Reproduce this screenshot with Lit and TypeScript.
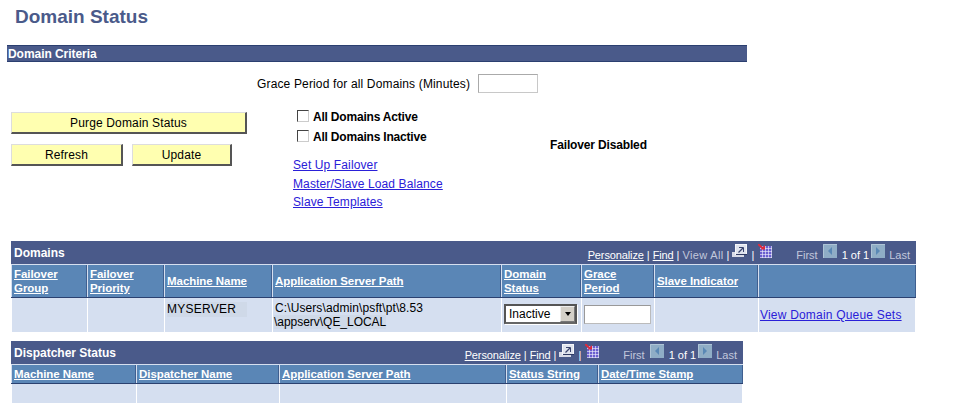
import { LitElement, html, css, svg } from "lit";
import { customElement } from "lit/decorators.js";

const newWin = html`<svg class="ic" width="15" height="14" viewBox="0 0 15 14"><path d="M0 8h3v3h9v2H0z" fill="#d8dbe8"/><rect x="3.5" y="0.5" width="11" height="10" fill="#dfe3ee" stroke="#f4f5fa"/><rect x="4" y="10" width="11" height="1" fill="#2f3a63"/><path d="M7 3.5h4.5V8" fill="none" stroke="#39436e"/><path d="M11 4 6.5 8.5" stroke="#39436e" stroke-width="1.3"/></svg>`;
const dl = html`<svg class="ic" width="15" height="14" viewBox="0 0 15 14"><rect x="2" y="2" width="12" height="12" fill="#f4f4fc"/>${[2, 5, 8, 11].flatMap(y => [2, 5, 8, 11].map(x => svg`<rect x="${x}" y="${y}" width="2.4" height="2.4" fill="#6a5fd0"/>`))}<path d="M0 0 5 4.5" stroke="#e02a3a" stroke-width="2"/><path d="M2.5 5.5h4.5V1z" fill="#e02a3a"/></svg>`;
const arrow = (left: boolean) => html`<svg class="ic" width="14" height="14" viewBox="0 0 14 14"><rect width="14" height="14" fill="#8fadc6"/><path d="M.5 14V.5H14" fill="none" stroke="#aec4d6"/><path d="${left ? "M9 3v8L5 7z" : "M5 3v8l4-4z"}" fill="#5a88b5"/></svg>`;

@customElement("grid-box")
class GridBox extends LitElement {
  static properties = { title: {}, cols: { type: Array }, tpl: {}, viewAll: { type: Boolean }, tall: { type: Boolean } };
  title = "";
  cols: string[] = [];
  tpl = "";
  viewAll = false;
  tall = false;
  static styles = css`
    :host { display: block; font: 12px "Liberation Sans", Arial, sans-serif; }
    .bar { height: 23px; background: #4a5a8a; color: #fff; display: flex; align-items: center; justify-content: space-between; padding: 0 6px 0 3px; }
    .bar b { font-size: 12px; }
    .nav { display: flex; align-items: center; font-size: 11px; color: #e8ebf4; white-space: nowrap; position: relative; top: 2px; }
    .nav a { color: #fff; text-decoration: underline; letter-spacing: -0.12px; }
    .nav .dim { color: #c2c8dc; }
    .nav .va { letter-spacing: 0.35px; }
    .nav .sep { margin: 0 3px; color: #fff; }
    .nav .sp2 { margin: 0 4px; }
    .nav .ic { position: relative; top: -3.5px; }
    .nav .first { margin-left: 23px; }
    .nav .arr { margin: 0 5px; display: flex; }
    .nav .arr2 { margin: 0 4px 0 2px; }
    .nav .of { color: #fff; }
    .row { display: grid; }
    .hd { background: #2b4170; padding-bottom: 1px; }
    .hd > div { background: #5a86b6; box-shadow: inset -1px 0 0 #3f5f90; color: #fff; font-weight: bold; font-size: 11.5px; line-height: 14px; text-decoration: underline; padding: 2px 3px 2px 2px; display: flex; align-items: center; border-left: 1px solid #d6dfef; border-top: 1px solid #d6dfef; box-sizing: border-box; letter-spacing: -0.05px; }
    .hd > div span { display: block; }
    .bd > div { background: #d5dff0; border-left: 1px solid #fff; box-sizing: border-box; min-height: 19px; }
    .body-tall > div { min-height: 34px; font-size: 12px; color: #000; }
    .m { padding: 4px 3px 0 2px; }
    .m span { background: #cfd9e8; padding-right: 11px; display: inline-block; line-height: 15px; letter-spacing: 0.25px; }
    .p { padding: 3px 0 0 2px; line-height: 14px; letter-spacing: 0.1px; }
    .p span { background: #cfd9e8; letter-spacing: -0.03px; margin-left: -1px; }
    .sel { padding: 6px 0 0 2px; }
    .fake { width: 73px; height: 20px; box-sizing: border-box; background: #fff; border: 2px solid; border-color: #555 #555 #666 #555; box-shadow: 1px 1px 0 #fff; display: flex; justify-content: space-between; align-items: center; font-size: 12px; padding-left: 3px; }
    .fake i { width: 15px; height: 16px; background: #d4d0c8; border: 1px solid; border-color: #eee #777 #777 #eee; box-sizing: border-box; display: flex; align-items: center; justify-content: center; }
    .fake i::after { content: ""; border: 3.5px solid transparent; border-top: 4px solid #000; border-bottom: 0; }
    .inp { padding: 7px 0 0 2px; }
    .inp div { width: 67px; height: 19px; box-sizing: border-box; background: #fff; border: 1px solid #bbb; border-top-color: #999; border-left-color: #999; }
    .lnk { padding: 10px 0 0 1px; }
    .lnk a { color: #2a20d8; text-decoration: underline; letter-spacing: 0.2px; }
  `;
  render() {
    const title2 = (c: string) => c.includes("|") ? c.split("|").map(x => html`<span>${x}</span>`) : c;
    return html`
      <div class="bar"><b>${this.title}</b>
        <div class="nav">
          <a>Personalize</a><span class="sep">|</span><a>Find</a><span class="sep">|</span>
          ${this.viewAll ? html`<span class="dim va">View All</span><span class="sep">|</span>` : ""}
          ${newWin}<span class="sep sp2">|</span>${dl}
          <span class="first dim">First</span><span class="arr">${arrow(true)}</span><span class="of">1 of 1</span><span class="arr arr2">${arrow(false)}</span><span class="dim">Last</span>
        </div>
      </div>
      <div class="row hd" style="grid-template-columns:${this.tpl}">${this.cols.map(c => html`<div><div>${title2(c)}</div></div>`)}</div>
      <div class="row bd ${this.tall ? "body-tall" : ""}" style="grid-template-columns:${this.tpl}; padding-right:1px">
        ${this.tall ? html`
          <div></div><div></div>
          <div class="m"><span>MYSERVER</span></div>
          <div class="p">C:\\Users\\admin\\psft\\pt\\8.53<br><span>\\appserv\\QE_LOCAL</span></div>
          <div class="sel"><div class="fake">Inactive<i></i></div></div>
          <div class="inp"><div></div></div>
          <div></div>
          <div class="lnk"><a>View Domain Queue Sets</a></div>
        ` : this.cols.map(() => html`<div></div>`)}
      </div>`;
  }
}

@customElement("app-root")
class AppRoot extends LitElement {
  static styles = css`
    :host { display: block; width: 956px; height: 414px; overflow: hidden; background: #fff; font: 12px "Liberation Sans", Arial, sans-serif; color: #000; }
    h1 { margin: 0; padding: 7px 0 0 15px; height: 45px; box-sizing: border-box; font-size: 19px; line-height: 20px; font-weight: bold; color: #4a5a8a; }
    .sec { margin-left: 7px; width: 740px; height: 17px; box-sizing: border-box; background: #4a5a8a; border-top: 1px solid #2b3f70; border-bottom: 1px solid #2b3f70; color: #fff; font-weight: bold; line-height: 16px; padding-left: 1px; letter-spacing: -0.05px; }
    .grace { display: flex; align-items: center; height: 19px; margin: 12px 0 0 257px; gap: 8px; letter-spacing: 0.15px; }
    .grace div { width: 60px; height: 19px; box-sizing: border-box; border: 1px solid #c8c8c8; border-top-color: #aaa; border-left-color: #aaa; }
    .crit { display: grid; grid-template-columns: 282px 257px auto; margin: 18px 0 0 11px; height: 130px; }
    .btns { display: flex; flex-wrap: wrap; column-gap: 9px; row-gap: 10px; align-content: start; padding-top: 1px; }
    .btn { height: 22px; box-sizing: border-box; background: #ffffb0; border: 1px solid; border-color: #ddd #555 #555 #ddd; border-bottom-width: 2px; border-right-width: 2px; text-align: center; line-height: 20px; letter-spacing: 0.15px; }
    .ck { display: flex; align-items: center; height: 20px; font-weight: bold; margin-left: 4px; gap: 4px; letter-spacing: -0.2px; position: relative; top: -4px; }
    .ck i { width: 12px; height: 12px; box-sizing: border-box; background: #fff; border: 1px solid; border-color: #444 #ccc #ccc #444; position: relative; top: -1px; }
    .links { margin-top: 5px; display: flex; flex-direction: column; }
    .links a { color: #2a20d8; text-decoration: underline; line-height: 18.5px; letter-spacing: 0.12px; }
    .fo { font-weight: bold; padding-top: 27px; letter-spacing: -0.15px; }
    grid-box { margin-left: 11px; }
    .g1 { width: 905px; }
    .g2 { width: 732px; margin-top: 9px; }
  `;
  render() {
    return html`
      <h1>Domain Status</h1>
      <div class="sec">Domain Criteria</div>
      <div class="grace">Grace Period for all Domains (Minutes)<div></div></div>
      <div class="crit">
        <div class="btns">
          <div class="btn" style="width:236px">Purge Domain Status</div>
          <div class="btn" style="width:112px">Refresh</div>
          <div class="btn" style="width:100px">Update</div>
        </div>
        <div>
          <div class="ck"><i></i>All Domains Active</div>
          <div class="ck"><i></i>All Domains Inactive</div>
          <div class="links"><a>Set Up Failover</a><a>Master/Slave Load Balance</a><a>Slave Templates</a></div>
        </div>
        <div class="fo">Failover Disabled</div>
      </div>
      <grid-box class="g1" title="Domains" viewAll tall tpl="76px 77px 108px 229px 80px 73px 104px 1fr"
        .cols=${["Failover|Group", "Failover|Priority", "Machine Name", "Application Server Path", "Domain|Status", "Grace|Period", "Slave Indicator", ""]}></grid-box>
      <grid-box class="g2" title="Dispatcher Status" tpl="125px 143px 227px 92px 1fr"
        .cols=${["Machine Name", "Dispatcher Name", "Application Server Path", "Status String", "Date/Time Stamp"]}></grid-box>
    `;
  }
}
